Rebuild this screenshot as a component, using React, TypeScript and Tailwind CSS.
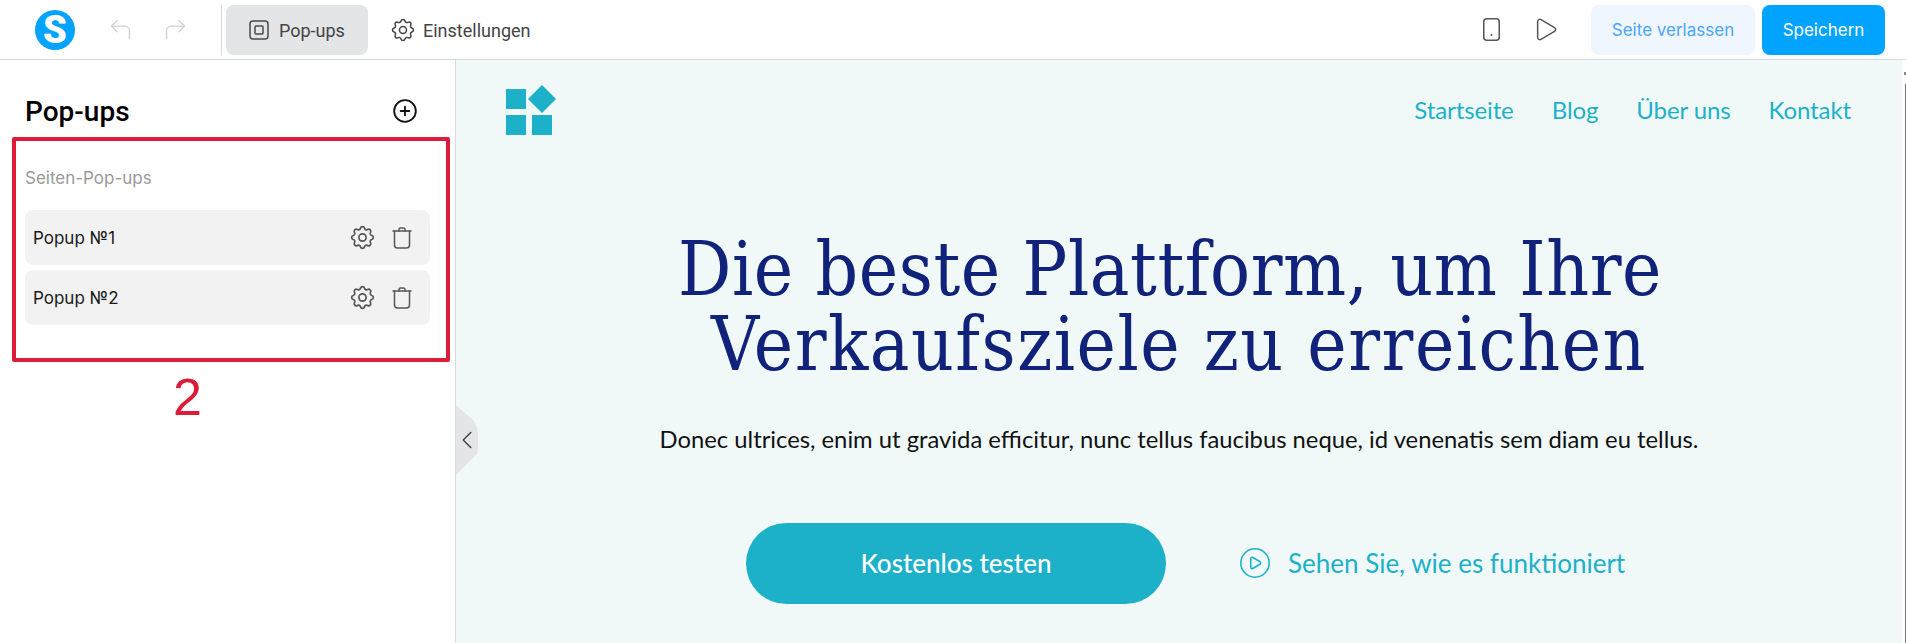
import React from "react";
import { ChevronLeft, CirclePlay, CirclePlus, CornerUpLeft, CornerUpRight, Play } from "lucide-react";
import { TbSettings } from "react-icons/tb";

const inter = "font-['Inter',sans-serif]";
const roboto = "font-['Roboto',sans-serif]";
const source = "font-['Lato',sans-serif]";

function TrashIcon() {
  return (
    <svg width="22" height="24" viewBox="0 0 22 24" fill="none" stroke="#555" strokeWidth="1.5" strokeLinecap="round" strokeLinejoin="round">
      <path d="M2 5h18" />
      <path d="M8 5V3.500A1.500 1.500 0 0 1 9.500 2h3A1.500 1.500 0 0 1 14 3.500V5" />
      <path d="M3.500 5v14a3 3 0 0 0 3 3h9a3 3 0 0 0 3-3V5" />
    </svg>
  );
}

function PopupRow({ name }: { name: string }) {
  return (
    <div className="flex h-[55px] w-[405px] items-center rounded-lg bg-[#f2f2f2] pl-2 pr-[17px]">
      <span className={`${inter} mt-[2px] flex-1 text-[17px] text-[#1a1a1a]`}>{name}</span>
      <TbSettings size={29} strokeWidth={1.4} color="#555" />
      <span className="ml-[14px]">
        <TrashIcon />
      </span>
    </div>
  );
}

export default function App() {
  return (
    <div className="flex h-[643px] w-[1906px] flex-col overflow-hidden bg-white">
      <header className="flex h-[60px] shrink-0 items-center border-b border-[#d9d9d9] bg-white">
        <div className="ml-[35px] flex h-[40px] w-[40px] items-center justify-center rounded-full bg-[#00a3ff]">
          <span className={`${roboto} text-[38px] font-black leading-none text-white`}>S</span>
        </div>
        <CornerUpLeft className="ml-[32px]" size={27} strokeWidth={1.3} color="#d4d4d4" />
        <CornerUpRight className="ml-[28px]" size={27} strokeWidth={1.3} color="#d4d4d4" />
        <div className="ml-[32px] h-[50px] w-px bg-[#d9d9d9]" />
        <div className="ml-[4px] flex h-[50px] w-[142px] items-center rounded-lg bg-[#e4e5e7] pl-[23px]">
          <svg width="20" height="20" viewBox="0 0 20 20" fill="none" stroke="#4a4a4a" strokeWidth="1.5">
            <rect x="1" y="1" width="18" height="18" rx="3" />
            <rect x="6" y="6" width="8" height="8" rx="1" />
          </svg>
          <span className={`${roboto} ml-[10px] mt-[2px] text-[18px] text-[#444]`}>Pop-ups</span>
        </div>
        <div className="ml-[21px] flex items-center">
          <TbSettings size={28} strokeWidth={1.3} color="#444" />
          <span className={`${roboto} ml-[6px] mt-[2px] text-[18px] text-[#444]`}>Einstellungen</span>
        </div>
        <div className="ml-auto flex items-center">
          <svg width="17" height="23" viewBox="0 0 17 23" fill="none" stroke="#555" strokeWidth="1.500">
            <rect x="0.750" y="0.750" width="15.500" height="21.500" rx="3" />
            <circle cx="8.500" cy="17" r="1" fill="#555" stroke="none" />
          </svg>
          <Play className="ml-[32px]" size={27} strokeWidth={1.3} color="#555" />
          <div className={`${inter} ml-[32px] flex h-[50px] w-[164px] items-center justify-center rounded-lg bg-[#eff6fd] pt-[2px] text-[17px] text-[#4aa5ff]`}>
            Seite verlassen
          </div>
          <div className={`${inter} ml-[7px] mr-[21px] flex h-[50px] w-[123px] items-center justify-center rounded-lg bg-[#00a3ff] pt-[2px] text-[17px] text-white`}>
            Speichern
          </div>
        </div>
      </header>

      <div className="flex min-h-0 flex-1">
        <aside className="w-[456px] shrink-0 border-r border-[#d9d9d9] bg-white">
          <div className="flex h-[77px] items-center justify-between pl-[25px] pr-[37px] pt-[24px]">
            <h2 className={`${roboto} mt-[2px] text-[28px] font-medium text-black`}>Pop-ups</h2>
            <CirclePlus size={26} strokeWidth={1.7} color="#111" />
          </div>
          <div className="ml-[12px] h-[225px] w-[438px] rounded-[2px] border-[4px] border-[#dc1c38] px-[9px] pt-[18px]">
            <p className={`${inter} text-[17px] leading-[38px] text-[#999]`}>Seiten-Pop-ups</p>
            <div className="mt-[13px] flex flex-col gap-[5px]">
              <PopupRow name="Popup №1" />
              <PopupRow name="Popup №2" />
            </div>
          </div>
          <p className="ml-[12px] mt-[6px] w-[351px] text-center font-['Liberation_Sans',sans-serif] text-[52px] leading-[58px] text-[#dc1c38]">2</p>
        </aside>

        <main className="relative min-w-0 flex-1 bg-[#f0f9f8]">
          {/* sidebar collapse handle */}
          <div className="absolute left-0 top-[345px] flex h-[70px] w-[22px] items-center justify-center bg-[#e4e5e7] [clip-path:polygon(0_0,80%_22%,95%_32%,100%_42%,100%_62%,95%_70%,0_100%)]">
            <ChevronLeft className="shrink-0" size={30} strokeWidth={1.2} color="#444" />
          </div>

          <div className="flex h-[100px] items-center pl-[50px] pr-[51px]">
            <svg width="50" height="50" viewBox="0 0 50 50" fill="#1cb1c9">
              <rect x="0" y="4" width="20" height="20" />
              <rect x="0" y="30" width="20" height="20" />
              <rect x="26" y="30" width="20" height="20" />
              <polygon points="36,0 50,14 36,28 22,14" />
            </svg>
            <nav className={`${source} ml-auto flex gap-[38px] text-[24px] tracking-[-0.1px] text-[#1cb1c9]`}>
              <span>Startseite</span>
              <span>Blog</span>
              <span>Über uns</span>
              <span>Kontakt</span>
            </nav>
          </div>

          <h1 className="mt-[72px] text-center font-['DejaVu_Serif_Condensed','DejaVu_Serif',serif] text-[74px] font-normal leading-[75px] text-[#10227a]">
            <span className="block pr-[18px] tracking-[0.6px]">Die beste Plattform, um Ihre</span>
            <span className="block tracking-[1.5px]">Verkaufsziele zu erreichen</span>
          </h1>
          <p className={`${source} mt-[40px] text-center text-[23.8px] text-[#111]`}>
            Donec ultrices, enim ut gravida efficitur, nunc tellus faucibus neque, id venenatis sem diam eu tellus.
          </p>

          <div className="mt-[65px] flex items-center pl-[290px]">
            <div className={`${source} flex h-[81px] w-[420px] items-center justify-center rounded-[41px] bg-[#1cb1c9] text-[26px] font-medium text-white`}>
              Kostenlos testen
            </div>
            <CirclePlay className="ml-[72px]" size={34} strokeWidth={1.1} color="#1cb1c9" />
            <span className={`${source} ml-[16px] text-[26px] text-[#1cb1c9]`}>Sehen Sie, wie es funktioniert</span>
          </div>
        </main>

        {/* page scrollbar sliver */}
        <div className="flex w-[4px] shrink-0 flex-col items-end bg-white pt-[12px]">
          <div className="h-[3px] w-[2px] bg-[#888]" />
          <div className="mt-[9px] w-px flex-1 bg-[#777]" />
        </div>
      </div>
    </div>
  );
}
